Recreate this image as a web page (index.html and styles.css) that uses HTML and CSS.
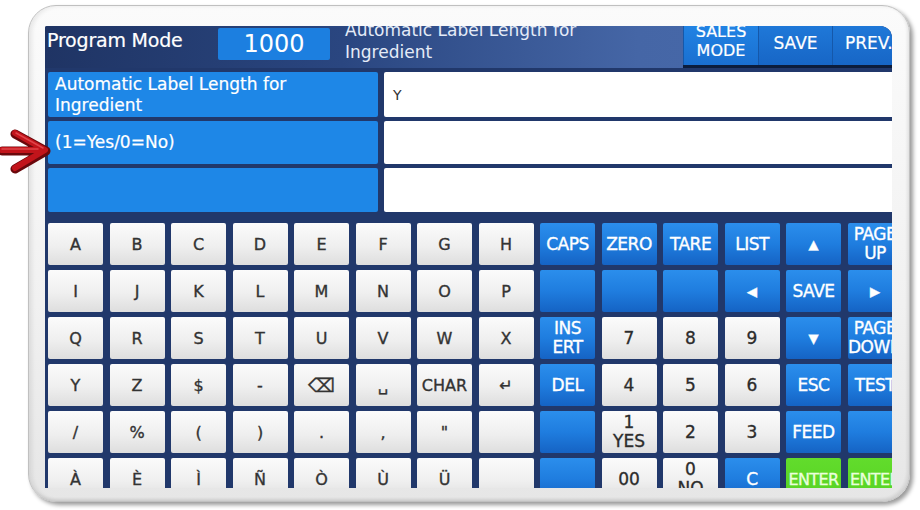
FILE: index.html
```html
<!DOCTYPE html>
<html>
<head>
<meta charset="utf-8">
<link rel="stylesheet" href="styles.css">
</head>
<body>
<div class="bezel">
  <div class="screen">
    <div class="topbar">
      <div class="mode">Program Mode</div>
      <div class="code">1000</div>
      <div class="title">Automatic Label Length for<br>Ingredient</div>
      <div class="tbtns">
        <div class="tbtn sales">SALES<br>MODE</div>
        <div class="tbtn save">SAVE</div>
        <div class="tbtn prev">PREV.</div>
      </div>
    </div>
    <div class="fields">
      <div class="label">Automatic Label Length for<br>Ingredient</div><div class="value">Y</div>
      <div class="label">(1=Yes/0=No)</div><div class="value"></div>
      <div class="label"></div><div class="value"></div>
    </div>
    <div class="keys">
      <div class="key">A</div><div class="key">B</div><div class="key">C</div><div class="key">D</div><div class="key">E</div><div class="key">F</div><div class="key">G</div><div class="key">H</div>
      <div class="key blue">CAPS</div><div class="key blue">ZERO</div><div class="key blue">TARE</div><div class="key blue">LIST</div><div class="key blue sym">▲</div><div class="key blue">PAGE<br>UP</div>

      <div class="key">I</div><div class="key">J</div><div class="key">K</div><div class="key">L</div><div class="key">M</div><div class="key">N</div><div class="key">O</div><div class="key">P</div>
      <div class="key blue"></div><div class="key blue"></div><div class="key blue"></div><div class="key blue sym">◀</div><div class="key blue">SAVE</div><div class="key blue sym">▶</div>

      <div class="key">Q</div><div class="key">R</div><div class="key">S</div><div class="key">T</div><div class="key">U</div><div class="key">V</div><div class="key">W</div><div class="key">X</div>
      <div class="key blue">INS<br>ERT</div><div class="key num">7</div><div class="key num">8</div><div class="key num">9</div><div class="key blue sym">▼</div><div class="key blue">PAGE<br>DOWN</div>

      <div class="key">Y</div><div class="key">Z</div><div class="key">$</div><div class="key">-</div><div class="key bs">⌫</div><div class="key">␣</div><div class="key">CHAR</div><div class="key">↵</div>
      <div class="key blue">DEL</div><div class="key num">4</div><div class="key num">5</div><div class="key num">6</div><div class="key blue">ESC</div><div class="key blue">TEST</div>

      <div class="key">/</div><div class="key">%</div><div class="key">(</div><div class="key">)</div><div class="key">.</div><div class="key">,</div><div class="key">"</div><div class="key"></div>
      <div class="key blue"></div><div class="key num two">1<br>YES</div><div class="key num">2</div><div class="key num">3</div><div class="key blue">FEED</div><div class="key blue"></div>

      <div class="key">À</div><div class="key">È</div><div class="key">Ì</div><div class="key">Ñ</div><div class="key">Ò</div><div class="key">Ù</div><div class="key">Ü</div><div class="key"></div>
      <div class="key blue"></div><div class="key num">00</div><div class="key num two">0<br>NO</div><div class="key blue">C</div><div class="key green">ENTER</div><div class="key green">ENTER</div>
    </div>
  </div>
</div>
<svg class="arrow" width="52" height="50" viewBox="0 0 52 50">
  <path d="M2 24 L40 24 M15 7 L46 24 L15 42" fill="none" stroke="#6a080c" stroke-width="9" stroke-linecap="round" stroke-linejoin="round"/>
  <path d="M2 23 L39 23 M15 6 L45 23 L15 41" fill="none" stroke="#c2141b" stroke-width="6" stroke-linecap="round" stroke-linejoin="round"/>
  <path d="M2 22 L38 22 M16 6 L43 21" fill="none" stroke="#e0444a" stroke-width="1.5" stroke-linecap="round"/>
</svg>
</body>
</html>
```
FILE: styles.css
```css
html, body {
  margin: 0;
  padding: 0;
  background: #ffffff;
}
body {
  font-family: "DejaVu Sans", "Noto Sans", sans-serif;
  width: 920px;
  height: 510px;
  position: relative;
  overflow: hidden;
}
.bezel {
  box-sizing: border-box;
  margin: 5px 0 0 28px;
  width: 882px;
  height: 497px;
  padding: 20px 17px 13px 16px;
  border: 1px solid #c0c0c0;
  border-radius: 28px;
  background: linear-gradient(180deg, #fbfbfb 0%, #f1f1f1 60%, #e6e6e6 100%);
  box-shadow: 3px 3px 4px rgba(0,0,0,0.4), inset 3px 0 4px rgba(0,0,0,0.08), inset -2px -2px 3px rgba(0,0,0,0.08);
}
.screen {
  width: 847px;
  height: 462px;
  background: #21386b;
  overflow: hidden;
  border-radius: 2px 12px 0 0;
}
.topbar {
  height: 42px;
  display: flex;
  align-items: flex-start;
  background: linear-gradient(90deg, #1f3464 0%, #2a4680 35%, #4566a6 70%, #4a6bab 100%);
  color: #ffffff;
}
.mode {
  box-sizing: border-box;
  width: 173px;
  padding-left: 2px;
  font-size: 19px;
  line-height: 28px;
  letter-spacing: -0.2px;
  -webkit-text-stroke: 0.2px #ffffff;
}
.code {
  margin-top: 2px;
  width: 112px;
  height: 32px;
  background: #1c7fe0;
  border-radius: 2px;
  font-size: 24px;
  line-height: 32px;
  text-align: center;
}
.title {
  margin-left: 15px;
  margin-top: -7px;
  font-size: 17px;
  line-height: 22px;
  color: #e4ebf7;
}
.tbtns {
  margin-left: auto;
  display: flex;
  height: 39px;
  box-shadow: 0 3px 0 #0c1d3d;
}
.tbtn {
  box-sizing: border-box;
  height: 39px;
  padding-bottom: 6px;
  display: flex;
  align-items: center;
  justify-content: center;
  text-align: center;
  background: linear-gradient(180deg, #1f78d8 0%, #1766c6 100%);
  font-size: 17px;
  color: #ffffff;
  border-left: 1px solid #1558aa;
  -webkit-text-stroke: 0.2px #ffffff;
}
.sales { width: 75px; font-size: 16px; line-height: 19px; padding-bottom: 10px; background: linear-gradient(180deg, #2183e4 0%, #1a6fd0 100%); }
.save { width: 74px; }
.prev { width: 60px; justify-content: flex-start; padding-left: 12px; border-radius: 0 10px 0 0; }
.fields {
  display: grid;
  grid-template-columns: 330px 1fr;
  grid-template-rows: 45px 43px 44px;
  column-gap: 6px;
  row-gap: 4px;
  margin-top: 4px;
  padding-left: 3px;
}
.label {
  background: #1e87e7;
  color: #ffffff;
  font-size: 17px;
  line-height: 21px;
  padding-left: 7px;
  display: flex;
  align-items: center;
  border-radius: 2px;
  -webkit-text-stroke: 0.2px #ffffff;
}
.value {
  background: #ffffff;
  color: #333333;
  font-size: 14px;
  padding-left: 9px;
  display: flex;
  align-items: center;
  border-radius: 2px 0 0 2px;
}
.keys {
  display: grid;
  grid-template-columns: repeat(14, 55px);
  grid-template-rows: repeat(6, 42px);
  column-gap: 6.5px;
  row-gap: 5px;
  margin-top: 11px;
  padding-left: 3px;
}
.key {
  display: flex;
  align-items: center;
  justify-content: center;
  text-align: center;
  border-radius: 2px;
  background: linear-gradient(180deg, #fbfbfb 0%, #efefef 55%, #dedede 100%);
  color: #333333;
  font-size: 16px;
  line-height: 19px;
  overflow: hidden;
  white-space: nowrap;
  -webkit-text-stroke: 0.35px #333333;
}
.key.num { font-size: 17px; color: #2a2a2a; }
.key.two { line-height: 19px; }
.key.bs { font-size: 19px; }
.key.blue {
  background: linear-gradient(180deg, #2b8eec 0%, #1f7ddf 50%, #1563c4 100%);
  color: #ffffff;
  font-size: 17px;
  letter-spacing: -0.5px;
  -webkit-text-stroke: 0.35px #ffffff;
}
.key.sym { font-size: 13px; letter-spacing: 0; }
.key.green {
  background: linear-gradient(180deg, #62dc2c 0%, #56d223 100%);
  color: #e9ffdc;
  font-size: 16px;
  letter-spacing: -0.6px;
  -webkit-text-stroke: 0.35px #e9ffdc;
}
.arrow {
  position: absolute;
  left: 0;
  top: 127px;
}
```
